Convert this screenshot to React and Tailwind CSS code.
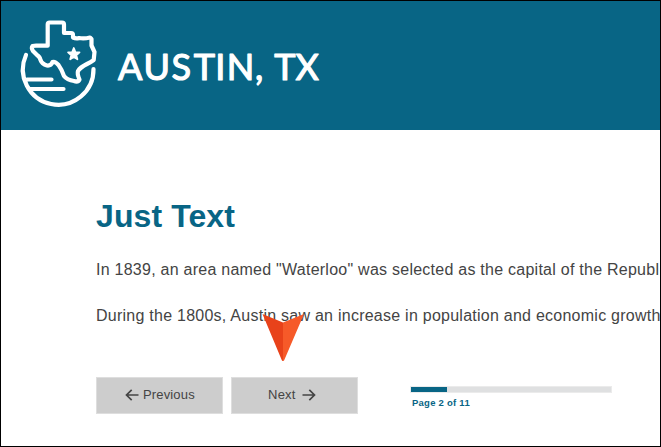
function Logo() {
  return (
    <svg className="block h-[128px] w-[340px]" viewBox="1 1 340 128" fill="none" stroke="#fff" strokeLinecap="round" strokeLinejoin="round">
      <path
        strokeWidth="4.2"
        d="M47.7 45.7V24.5Q47.7 22.5 49.7 22.5H62Q64 22.5 64 24.5V33H71Q73 33 73 35V37.5Q76 39 79 38Q84 39 90 37.5L91.5 39V45.5L94.5 52L93.7 60Q91 62 87 64Q80 67.500 78 71Q77 74 79.500 79.500Q78 82.500 74 81Q67 80 64 76Q61.500 69 58.500 65Q55 61 52.500 62Q51 66 47 65.500Q42 64 40.500 60Q40 57 37 55L33 51Q31 48 32.500 46Q34 45.700 36 45.700Z"
      />
      <path strokeWidth="4.2" d="M26 55A35.300 35.300 0 1 0 93.500 69M27 79.500H51.500M29 89H63.500" />
      <path
        fill="#fff"
        strokeWidth="1.8"
        d="M73.800 48L75.400 52.100 79.500 52.400 76.300 55.200 77.400 59.300 73.800 57.100 70.200 59.300 71.300 55.200 68.100 52.400 72.200 52.100Z"
      />
      <text
        x="130.2 156.8 181.2 204.5 220.2 240.5 259 266 284.8 307.3"
        y="80.3"
        fill="#fff"
        strokeWidth="1.2"
        textAnchor="middle"
        className="font-['Lato',sans-serif] text-[36px]"
      >
        AUSTIN, TX
      </text>
    </svg>
  );
}

function ArrowIcon({ className }) {
  return (
    <svg className={className} viewBox="0 0 14 12" fill="none" stroke="#444" strokeWidth="1.7">
      <path d="M0.500 6H12.500M7.300 0.900L12.500 6L7.300 11.100" />
    </svg>
  );
}

function Pointer() {
  return (
    <svg className="absolute left-[261px] top-[312px] h-[49px] w-[42px]" viewBox="0 0 42 49">
      <path d="M0.500 1L21 9.500V48Q20 48 19.500 46.500Z" fill="#e8421a" />
      <path d="M42 1L21 9.500V48Q22 48 22.500 46.500Z" fill="#f65a29" />
    </svg>
  );
}

export default function App() {
  return (
    <div className="relative h-[447px] w-[661px] overflow-hidden border border-black bg-white font-['Liberation_Sans',Arial,sans-serif] text-[#444]">
      <header className="h-[129px] bg-[#086585]">
        <Logo />
      </header>
      <main className="pl-[95px]">
        <h1 className="pt-[66px] text-[32px] leading-[40px] font-bold tracking-[0.1px] text-[#086585]">Just Text</h1>
        <p className="mt-[22px] text-[16px] leading-[24px] tracking-[0.25px] whitespace-nowrap">
          In 1839, an area named "Waterloo" was selected as the capital of the Republ
        </p>
        <p className="mt-[22px] text-[16px] leading-[24px] tracking-[0.25px] whitespace-nowrap">
          During the 1800s, Austin saw an increase in population and economic growth
        </p>
        <div className="mt-[49px] flex items-start">
          <button className="flex h-[37px] w-[127px] items-center border border-[#dedede] bg-[#cdcdcd] pl-[28px] pb-[2px] text-[13px]">
            <ArrowIcon className="h-[12px] w-[14px] rotate-180" />
            <span className="ml-[4px] tracking-[0.15px]">Previous</span>
          </button>
          <button className="ml-[8px] flex h-[37px] w-[127px] items-center border border-[#dedede] bg-[#cdcdcd] pl-[36px] pb-[2px] text-[13px]">
            <span className="tracking-[0.25px]">Next</span>
            <ArrowIcon className="ml-[6px] h-[12px] w-[14px]" />
          </button>
          <div className="ml-[52px] mt-[9px] w-[202px]">
            <div className="h-[7px] border border-[#ebebeb] bg-[#dfe0e1]">
              <div className="h-full w-[36px] bg-[#086585]" />
            </div>
            <div className="mt-[3px] pl-[2px] text-[9.5px] leading-[14px] font-bold tracking-[0.25px] text-[#086585]">Page 2 of 11</div>
          </div>
        </div>
      </main>
      <Pointer />
    </div>
  );
}
